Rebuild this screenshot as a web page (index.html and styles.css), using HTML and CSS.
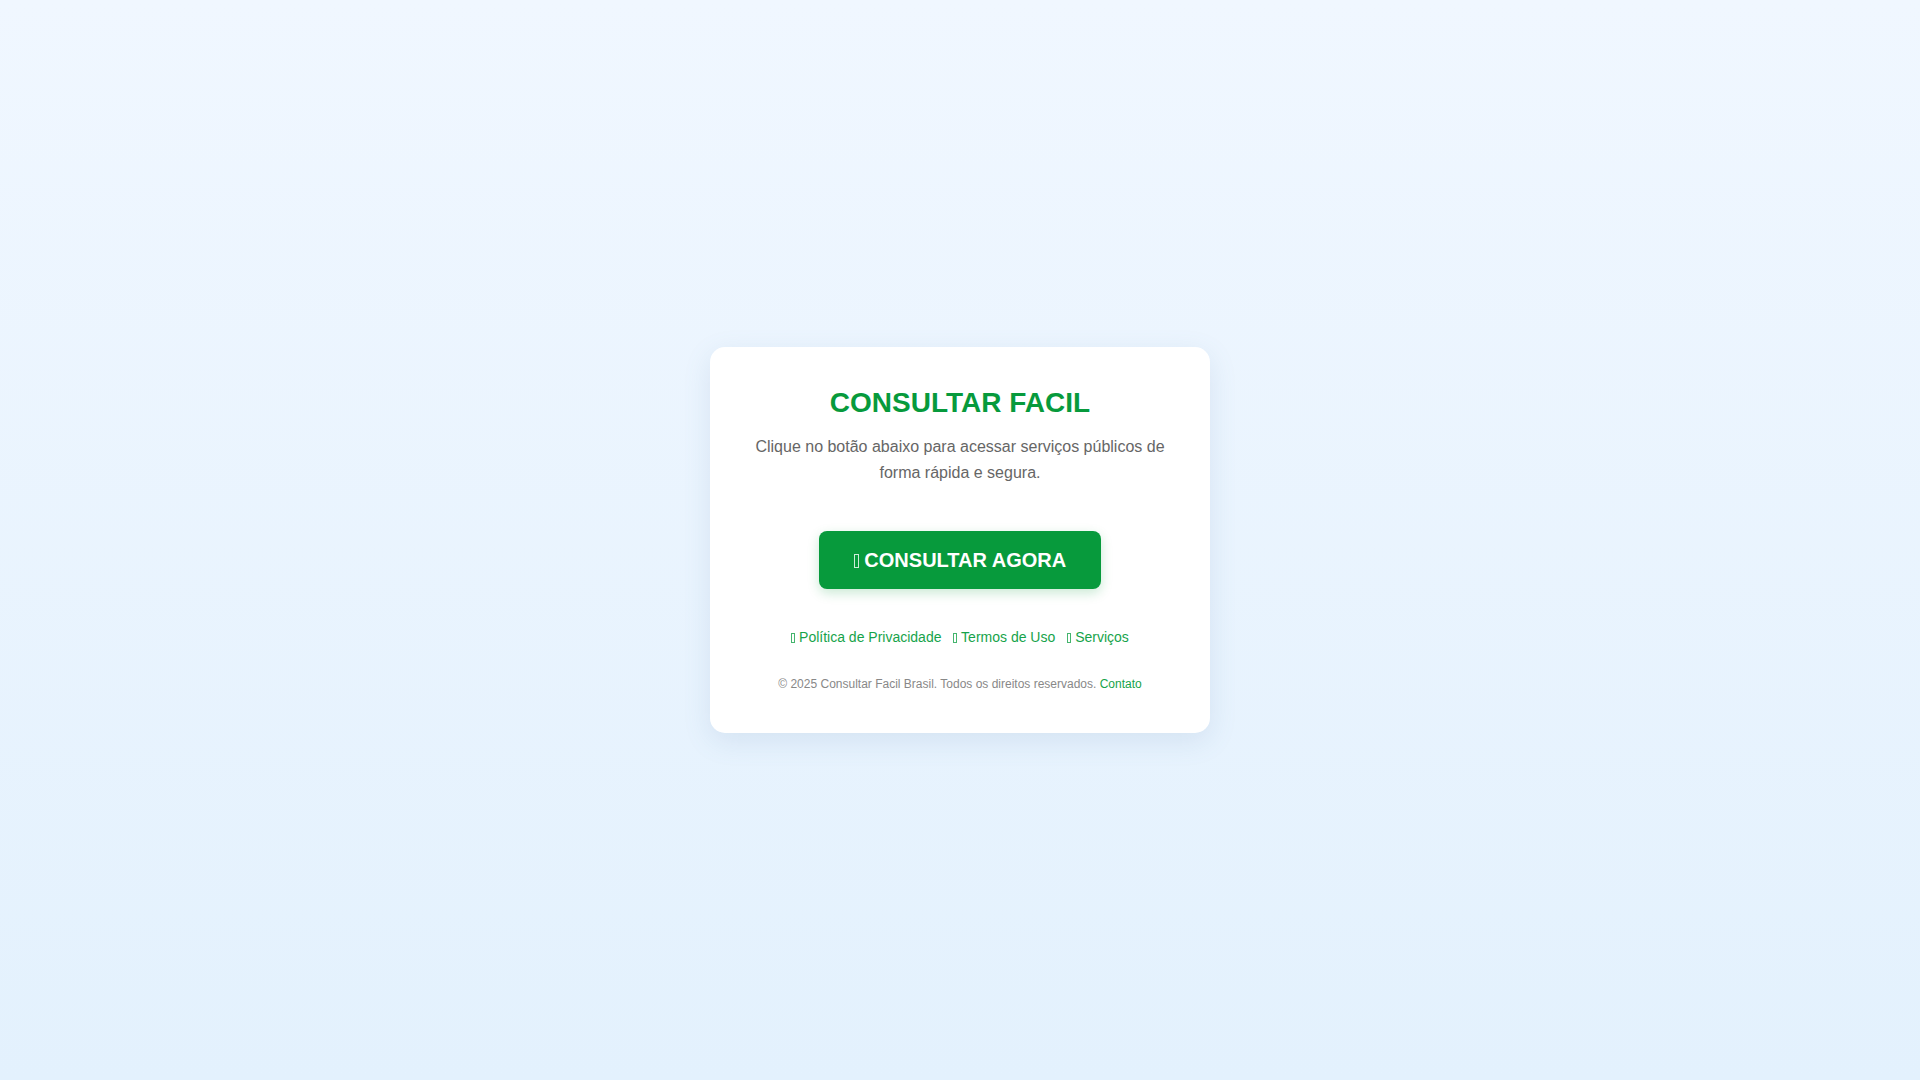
FILE: index.html
```html
<!DOCTYPE html>
<html lang="pt-BR">
<head>
<meta charset="utf-8">
<title>Consultar Facil</title>
<link rel="stylesheet" href="styles.css">
</head>
<body>
<main class="page">
  <section class="card">
    <h1 class="title">CONSULTAR FACIL</h1>
    <p class="lead">Clique no botão abaixo para acessar serviços públicos de forma rápida e segura.</p>
    <div class="action">
      <a class="btn" href="#"><span class="tofu tofu-lg"></span> CONSULTAR AGORA</a>
    </div>
    <nav class="links">
      <a href="#"><span class="tofu"></span> Política de Privacidade</a>
      <a href="#"><span class="tofu"></span> Termos de Uso</a>
      <a href="#"><span class="tofu"></span> Serviços</a>
    </nav>
    <p class="copy">© 2025 Consultar Facil Brasil. Todos os direitos reservados. <a href="#">Contato</a></p>
  </section>
</main>
</body>
</html>
```

FILE: styles.css
```css
* { box-sizing: border-box; }
html, body { margin: 0; padding: 0; height: 100%; }
body {
  font-family: "Liberation Sans", Arial, sans-serif;
  background: linear-gradient(180deg, #f0f7ff 0%, #e3f1fd 100%);
  color: #333;
}
.page {
  min-height: 100vh;
  display: flex;
  align-items: center;
  justify-content: center;
}
.card {
  width: 500px;
  background: #fff;
  border-radius: 15px;
  padding: 40px 40px 42px;
  text-align: center;
  box-shadow: 0 8px 28px rgba(90, 130, 170, 0.14);
}
.title {
  margin: 0 0 15px;
  font-size: 28px;
  font-weight: 700;
  color: #079a3c;
  line-height: 1.15;
}
.lead {
  margin: 0;
  font-size: 16px;
  line-height: 1.6;
  color: #666;
}
.action {
  margin-top: 46px;
  display: flex;
  justify-content: center;
}
.btn {
  display: inline-block;
  background: #079a3c;
  color: #fff;
  text-decoration: none;
  font-weight: 700;
  font-size: 20px;
  line-height: 22px;
  padding: 18px 35px;
  border-radius: 8px;
  box-shadow: 0 4px 12px rgba(7, 154, 60, 0.22);
}
.tofu {
  display: inline-block;
  width: 4px;
  height: 10px;
  border: 1px solid currentColor;
  opacity: 0.8;
  vertical-align: -1px;
}
.tofu-lg {
  width: 5px;
  height: 14px;
  vertical-align: -1px;
}
.links {
  margin-top: 40px;
  display: flex;
  justify-content: center;
  gap: 12px;
  font-size: 14px;
  line-height: 16px;
}
.links a {
  color: #16a34a;
  text-decoration: none;
}
.copy {
  margin: 32px 0 0;
  font-size: 12px;
  line-height: 14px;
  color: #888;
}
.copy a {
  color: #16a34a;
  text-decoration: none;
}
```
